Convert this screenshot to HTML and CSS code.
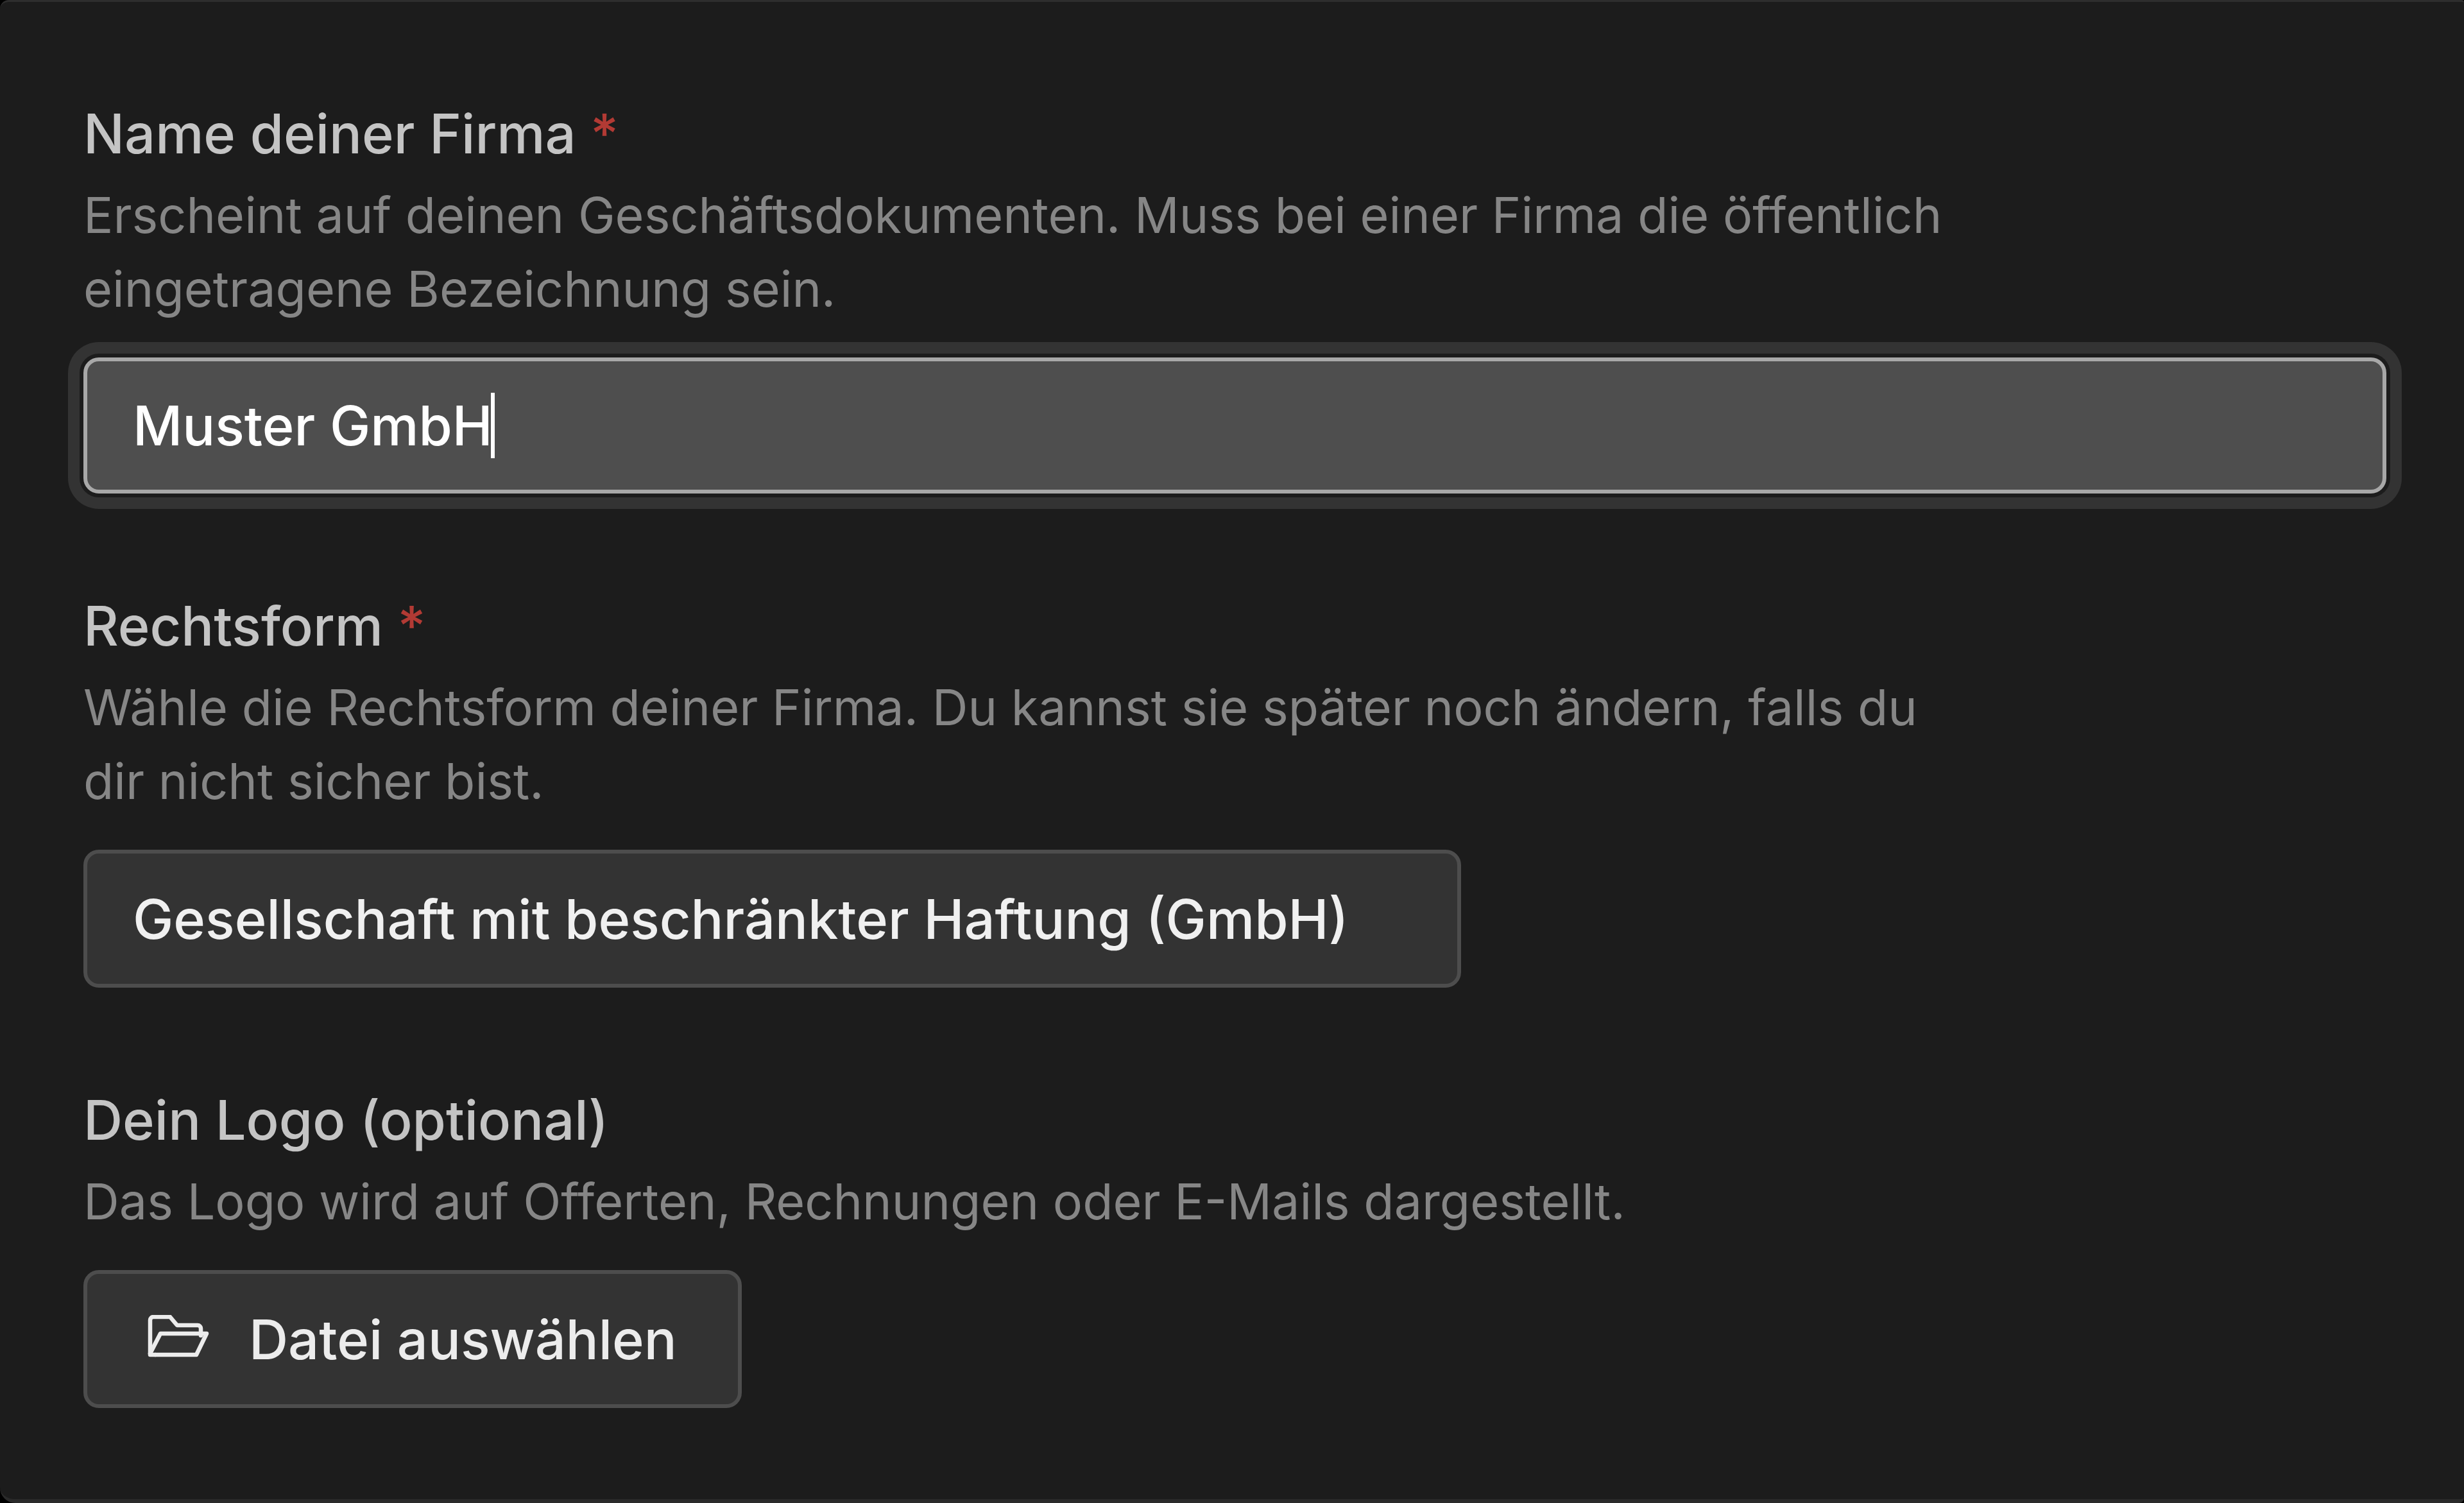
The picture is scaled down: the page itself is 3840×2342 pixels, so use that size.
FILE: index.html
```html
<!DOCTYPE html>
<html lang="de">
<head>
  <meta charset="UTF-8">
  <title>Firma</title>
  <link rel="stylesheet" href="styles.css">
</head>
<body>
  <form class="card">
    <div class="field">
      <label class="label">Name deiner Firma <span class="req">*</span></label>
      <p class="hint">Erscheint auf deinen Geschäftsdokumenten. Muss bei einer Firma die öffentlich eingetragene Bezeichnung sein.</p>
      <div class="input focused"><span>Muster GmbH</span><i class="caret"></i></div>
    </div>
    <div class="field">
      <label class="label">Rechtsform <span class="req">*</span></label>
      <p class="hint">Wähle die Rechtsform deiner Firma. Du kannst sie später noch ändern, falls du dir nicht sicher bist.</p>
      <div class="input select">Gesellschaft mit beschränkter Haftung (GmbH)</div>
    </div>
    <div class="field">
      <label class="label">Dein Logo (optional)</label>
      <p class="hint">Das Logo wird auf Offerten, Rechnungen oder E-Mails dargestellt.</p>
      <div class="input upload">
        <svg class="folder" viewBox="0 0 96 66" fill="none" stroke="currentColor" stroke-width="6.5" stroke-linejoin="round" stroke-linecap="round">
          <path d="M12 62H4V8a5 5 0 0 1 5-5h26l11 13h32a5 5 0 0 1 5 5v11"/>
          <path d="M4 60 20 29h72L76 62H12"/>
        </svg>
        <span>Datei auswählen</span>
      </div>
    </div>
  </form>
</body>
</html>
```

FILE: styles.css
```css
html, body{
  margin: 0;
  height: 100%;
  background-color: #000000;
}

body{
  font-family: Inter, "Liberation Sans", sans-serif;
  overflow: hidden;
}

.card{
  box-sizing: border-box;
  height: 2342px;
  padding: 155px 121px 0 130px;
  background-color: #1c1c1c;
  border-top: 3px solid #2e2e2e;
  border-bottom: 6px solid #2a2a2a;
  border-radius: 14px 4px 8px 24px;
}

.field{
  margin-bottom: 156px;
}

.label{
  display: block;
  font-size: 84.7px;
  font-weight: 500;
  line-height: 100px;
  color: #c4c4c4;
}

.req{
  color: #b23a34;
}

.hint{
  margin: 20px 0 49px;
  width: 2950px;
  font-size: 77.25px;
  line-height: 115px;
  color: #868686;
}

.input{
  box-sizing: border-box;
  display: flex;
  align-items: center;
  height: 215px;
  padding: 0 71px;
  border: 6px solid #4d4d4d;
  border-radius: 24px;
  background-color: #333333;
  color: #f0f0f0;
  font-size: 84.7px;
  font-weight: 500;
  white-space: nowrap;
}

.focused{
  height: 212px;
  border: 6px solid #a8a8a8;
  background-color: #4e4e4e;
  color: #ffffff;
  box-shadow: 0 0 0 6px #1c1c1c, 0 0 0 24px #333333;
}

.caret{
  width: 6px;
  height: 102px;
  margin-left: -3px;
  background-color: #ffffff;
}

.select{
  width: 2147px;
}

.upload{
  width: 1026px;
  padding: 0 94px;
  color: #ececec;
}

.folder{
  width: 96px;
  height: 66px;
  margin: 0 62px 10px 0;
  flex-shrink: 0;
}
```
